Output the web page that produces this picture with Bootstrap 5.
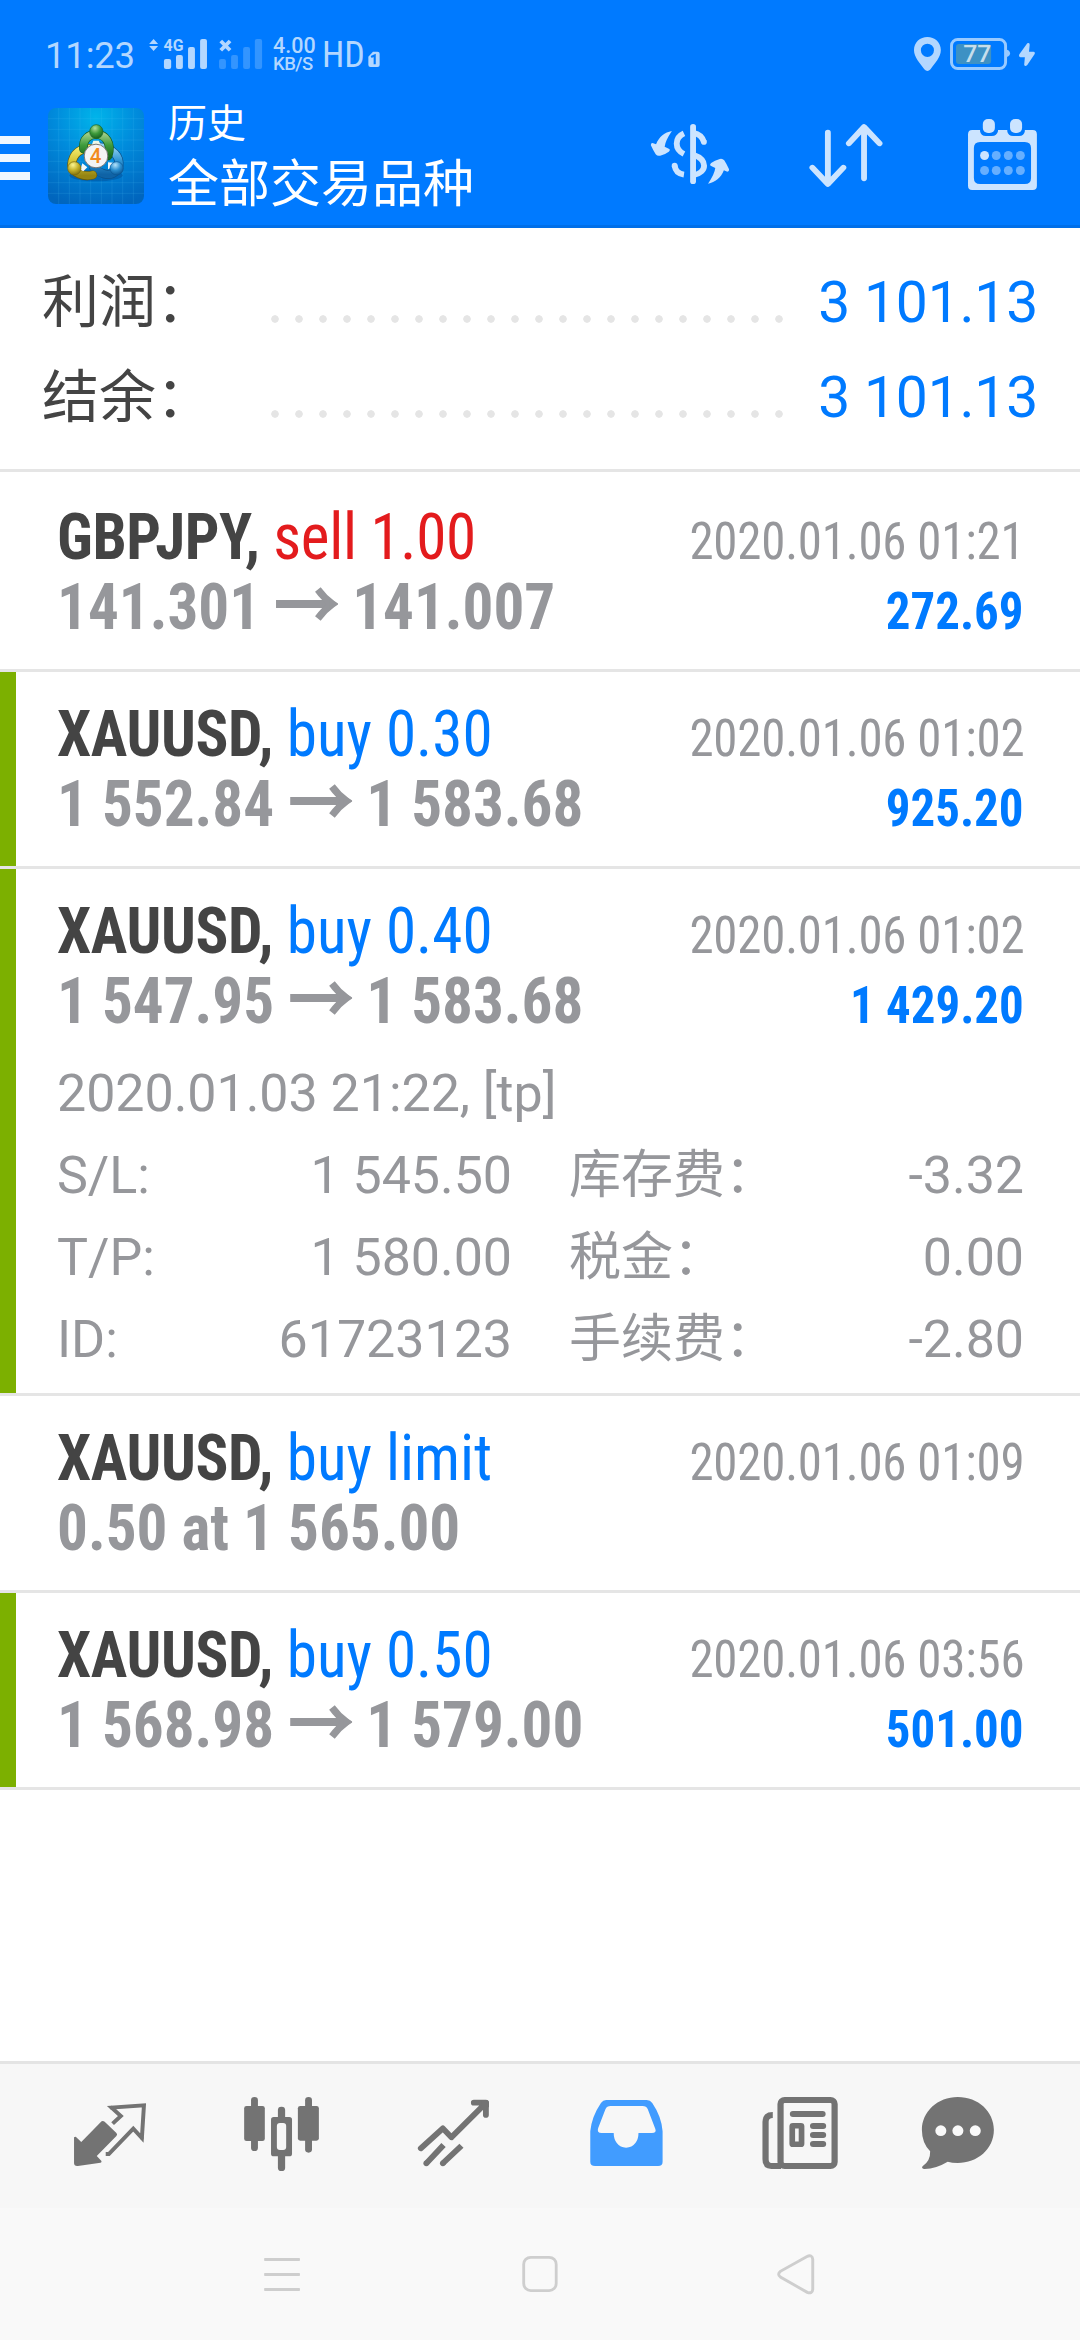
<!DOCTYPE html>
<html lang="zh-CN">
<head>
<meta charset="utf-8">
<meta name="viewport" content="width=device-width, initial-scale=1">
<title>历史</title>
<link href="https://cdn.jsdelivr.net/npm/bootstrap@5.3.0/dist/css/bootstrap.min.css" rel="stylesheet">
<style>
body{width:1080px;height:2340px;overflow:hidden;font-family:Roboto,"Noto Sans CJK SC",sans-serif;color:#444;background:#fff}
svg{display:block;flex:none}
.app-head{background:#007aff;height:228px;border-bottom:3px solid #006fe8}
.status{height:100px;color:#b3d7ff;padding-left:45px}
.clock{font-size:36.5px;width:100px;line-height:44px;margin-top:34px;letter-spacing:-.2px}
.speed{width:48px;margin-top:35px;margin-left:3px;font-weight:500}
.speed div{font-size:21.5px;line-height:21px}
.speed div+div{font-size:18.5px;line-height:19px;margin-top:-1px;letter-spacing:-.5px}
.hd{font-size:36px;font-stretch:75%;line-height:44px;margin-top:33px;margin-left:1px;width:46px}
.toolbar{height:125px}
.menu-bars{gap:10px;width:48px;padding-top:36px}
.menu-bars i{display:block;height:8px;width:30px;background:#f0f7ff}
.heads{color:#fff;margin-left:24px;width:447px}
.heads .t1{font-size:39px;line-height:46px;height:46px;margin-top:1px}
.heads .t2{font-size:51px;line-height:60px;height:60px;margin-top:8px}
.summary{height:244px;padding:27px 42px 0 43px;border-bottom:3px solid #e5e5e5;font-size:57px}
.sum-line{height:95px;line-height:95px}
.sum-line .lbl{width:220px;margin-left:-1px;white-space:nowrap}
.dots{width:528px;height:8px;background:radial-gradient(circle at 12px 4px,#e5e5e5 3.4px,transparent 4.1px) 0 0/24px 8px repeat-x;margin-top:60px;margin-left:1px}
.val{color:#007aff;letter-spacing:-.2px}
.deals>.deal{border:0;border-bottom:3px solid #e5e5e5!important;padding:27px 56px 27px 57px;border-radius:0;color:#96979b;background:#fff}
.deals>.deal:first-child{padding-top:30px}
.won{box-shadow:inset 16px 0 0 #7cb000}
.line{height:70px;line-height:70px;white-space:pre}
.lt,.rt{display:flex;align-items:baseline;transform:scaleX(.94);font-stretch:75%}
.lt{transform-origin:left;font-size:65px}
.rt{transform-origin:right;font-size:52px;letter-spacing:-.2px}
.rt b{letter-spacing:0}
.lt b,.rt b{font-weight:700}
.sym{color:#444;letter-spacing:-.4px}
.blue{color:#007aff}.red{color:#e31b1d;letter-spacing:-.3px}
.arr{margin:0 15px 0 17px}
.more{margin-top:17px;margin-bottom:-15px;font-size:52px;line-height:82px}
.more>div{height:82px;white-space:pre;letter-spacing:-.05px}
.c1{width:455px}.c2{width:455px}
.tabs{height:147px;background:#f7f7f7;border-top:3px solid #e4e4e4}
.sysnav{height:132px;background:#f9f9f9}
</style>
</head>
<body class="d-flex flex-column">
<svg width="0" height="0" style="display:none"><defs>
<symbol id="arrow" viewBox="0 0 66 42"><path d="M0 17H60" stroke="#96979b" stroke-width="8"/><path d="M44.500 2.500Q51 11 60 17Q51 23 44.500 31.500" fill="none" stroke="#96979b" stroke-width="7.500"/><path d="M57 11.500L66 17L57 22.500Z" fill="#96979b"/></symbol>
</defs></svg>
<header class="app-head flex-shrink-0">
 <div class="status d-flex">
  <div class="clock">11:23</div>
  <svg width="125" height="100" viewBox="421 0 363 300" preserveAspectRatio="none" fill="#b3d7ff">
   <path d="M446 117L459 132H433ZM446 153L459 138H433Z"/>
   <text x="475" y="153" font-size="49" font-weight="700" textLength="58" lengthAdjust="spacingAndGlyphs">4G</text>
   <rect x="476" y="177" width="21" height="30" rx="6"/><rect x="511" y="165" width="20" height="42" rx="6"/><rect x="546" y="141" width="20" height="66" rx="6"/><rect x="581" y="117" width="20" height="90" rx="6"/>
   <path d="M641 123L668 151M668 123L641 151" stroke="#b3d7ff" stroke-width="11"/>
   <g fill="#3395ff"><rect x="636" y="177" width="20" height="30" rx="6"/><rect x="671" y="165" width="20" height="42" rx="6"/><rect x="706" y="141" width="20" height="66" rx="6"/><rect x="740" y="117" width="21" height="90" rx="6"/></g>
  </svg>
  <div class="speed"><div>4.00</div><div>KB/S</div></div>
  <div class="hd">HD</div>
  <svg width="12" height="100" viewBox="1068 0 34 300" preserveAspectRatio="none"><path d="M1082 155H1095Q1101 155 1101 161V195Q1101 201 1095 201H1075Q1069 201 1069 195V170Z" fill="#b3d7ff"/><path d="M1077 171L1087 166V193" fill="none" stroke="#007aff" stroke-width="6"/></svg>
  <svg class="ms-auto" width="180" height="100" viewBox="1045.4 0 522.7 300" preserveAspectRatio="none">
   <path fill="#b3d7ff" fill-rule="evenodd" d="M1125 111C1146 111 1164 127 1164 150C1164 172 1146 190 1134 208Q1125 218 1116 208C1104 190 1086 172 1086 150C1086 127 1104 111 1125 111ZM1125 131A19 20 0 1 0 1125 171A19 20 0 1 0 1125 131Z"/>
   <rect x="1195" y="118.500" width="157" height="87" rx="18" fill="none" stroke="#99caff" stroke-width="8.500"/>
   <path d="M1356 149Q1365 152 1365 160Q1365 168 1356 171Z" fill="#99caff"/>
   <rect x="1208" y="132" width="102" height="60" rx="9" fill="#3d91c4"/>
   <text x="1229" y="186" font-size="70" font-weight="500" textLength="82" lengthAdjust="spacingAndGlyphs" fill="#c6deec">77</text>
   <path d="M1415 130Q1422 126 1422 134L1420 155H1433Q1439 156 1436 163L1415 195Q1408 201 1406 194L1408 172H1395Q1389 170 1392 163Z" fill="#b3d7ff"/>
  </svg>
 </div>
 <div class="toolbar d-flex">
  <div class="menu-bars d-flex flex-column"><i></i><i></i><i></i></div>
  <svg class="mt-2" width="96" height="96" viewBox="24 24 288 288">
   <defs>
    <radialGradient id="bg" cx=".5" cy=".1" r=".95"><stop offset="0" stop-color="#00b4ea"/><stop offset=".45" stop-color="#008bdc"/><stop offset="1" stop-color="#0065bd"/></radialGradient>
    <linearGradient id="gg" x2="0" y2="1"><stop stop-color="#9ccb84"/><stop offset=".5" stop-color="#3f9c3c"/><stop offset="1" stop-color="#1d6d20"/></linearGradient>
    <linearGradient id="gy" x2="0" y2="1"><stop stop-color="#f2ea6a"/><stop offset=".5" stop-color="#d3c231"/><stop offset="1" stop-color="#958412"/></linearGradient>
    <linearGradient id="gb" x2="0" y2="1"><stop stop-color="#8fd0f2"/><stop offset=".5" stop-color="#2e94d3"/><stop offset="1" stop-color="#0f63a6"/></linearGradient>
    <radialGradient id="bgn" cx=".4" cy=".25" r=".8"><stop stop-color="#b4e09b"/><stop offset=".5" stop-color="#3d9a3b"/><stop offset="1" stop-color="#125a1b"/></radialGradient>
    <radialGradient id="byl" cx=".4" cy=".25" r=".8"><stop stop-color="#fbf591"/><stop offset=".5" stop-color="#c5b32c"/><stop offset="1" stop-color="#7b6b08"/></radialGradient>
    <radialGradient id="bbl" cx=".4" cy=".25" r=".8"><stop stop-color="#b5e3fb"/><stop offset=".5" stop-color="#2b8fd0"/><stop offset="1" stop-color="#07508f"/></radialGradient>
   </defs>
   <rect x="24" y="24" width="288" height="288" rx="24" fill="url(#bg)"/>
   <path d="M56 24V312M88 24V312M120 24V312M152 24V312M184 24V312M216 24V312M248 24V312M280 24V312M24 56H312M24 88H312M24 120H312M24 152H312M24 184H312M24 216H312M24 248H312M24 280H312" stroke="#5ccbf5" stroke-opacity=".22" stroke-width="2"/>
   <ellipse cx="168" cy="226" rx="80" ry="18" fill="#003d80" opacity=".35"/>
   <g fill="none" stroke-linecap="round">
    <path d="M160 146C180 136 204 144 217 154C243 172 242 204 225 216C205 232 178 220 160 201" stroke="#0c4f88" stroke-width="27"/>
    <path d="M160 146C180 136 204 144 217 154C243 172 242 204 225 216C205 232 178 220 160 201" stroke="url(#gb)" stroke-width="23"/>
    <path d="M152 146C124 143 98 158 95 195C98 219 130 232 158 225" stroke="#65590c" stroke-width="27"/>
    <path d="M152 146C124 143 98 158 95 195C98 219 130 232 158 225" stroke="url(#gy)" stroke-width="23"/>
    <path d="M131 147C127 115 149 103 169 103C197 104 216 129 204 167" stroke="#165c1b" stroke-width="27"/>
    <path d="M131 147C127 115 149 103 169 103C197 104 216 129 204 167" stroke="url(#gg)" stroke-width="23"/>
   </g>
   <path d="M154 138L160 122H176L184 138Z" fill="#edf7e8"/><path d="M121 209L127 190L142 202L130 214ZM204 187L222 188L218 201L204 208Z" fill="#f3f8fb"/>
   <ellipse cx="169" cy="95" rx="20" ry="21" fill="url(#bgn)" stroke="#1a6423" stroke-width="2"/>
   <circle cx="103" cy="205" r="20" fill="url(#byl)" stroke="#766714" stroke-width="2"/>
   <circle cx="230" cy="205" r="20" fill="url(#bbl)" stroke="#0b5795" stroke-width="2"/>
   <circle cx="168" cy="168" r="35.500" fill="#f4f4f5" stroke="#777" stroke-width="3"/>
   <text x="167" y="189" font-size="62" font-weight="500" text-anchor="middle" textLength="35" lengthAdjust="spacingAndGlyphs" fill="#f28a1e">4</text>
  </svg>
  <div class="heads"><div class="t1">历史</div><div class="t2">全部交易品种</div></div>
  <svg width="150" height="125" viewBox="217.8 300 435.6 375" preserveAspectRatio="none" fill="#cce4ff">
   <path d="M383 393C362 397 346 410 337 433L327 429Q321 429 322 436Q329 452 336 463Q341 469 349 467Q364 463 374 455Q380 449 374 446L362 440Q364 422 383 393Z"/>
   <path d="M383 393C362 397 346 410 337 433L327 429Q321 429 322 436Q329 452 336 463Q341 469 349 467Q364 463 374 455Q380 449 374 446L362 440Q364 422 383 393Z" transform="rotate(180 435.500 472)"/>
   <rect x="436" y="372" width="17" height="180" rx="8.500"/>
   <g fill="none" stroke="#cce4ff" stroke-width="17"><path d="M418 400C390 413 390 448 418 462"/><path d="M445 398Q470 403 476 426M445 464C487 479 487 517 445 526" /><path d="M391 497C393 513 404 522 418 524"/></g>
   <circle cx="476" cy="426" r="8.500"/><circle cx="391" cy="497" r="8.500"/>
  </svg>
  <svg width="150" height="125" viewBox="653.4 300 435.6 375" preserveAspectRatio="none"><path d="M836 398V548M791 503L836 552L881 503M941 535V385M897 430L941 381L986 430" fill="none" stroke="#cce4ff" stroke-width="17" stroke-linecap="round" stroke-linejoin="round"/></svg>
  <svg width="165" height="125" viewBox="1089 300 479.2 375" preserveAspectRatio="none" fill="#cce4ff">
   <path fill-rule="evenodd" d="M1255 390H1278V394Q1280 408 1295 408H1312Q1327 408 1330 394V390H1357V394Q1359 408 1374 408H1391Q1406 408 1408 394V390H1431Q1443 390 1443 403V557Q1443 570 1431 570H1255Q1243 570 1243 557V403Q1243 390 1255 390ZM1278 426Q1260 426 1260 444V534Q1260 552 1278 552H1408Q1426 552 1426 534V444Q1426 426 1408 426Z"/>
   <rect x="1286" y="357" width="35" height="42" rx="15"/><rect x="1365" y="357" width="35" height="42" rx="15"/>
   <ellipse cx="1291" cy="466.500" rx="13" ry="13.500"/>
   <g fill="#66afff"><ellipse cx="1325" cy="466.500" rx="13" ry="13.500"/><ellipse cx="1360" cy="466.500" rx="13" ry="13.500"/><ellipse cx="1395" cy="466.500" rx="13" ry="13.500"/><ellipse cx="1291" cy="511.500" rx="13" ry="13.500"/><ellipse cx="1325" cy="511.500" rx="13" ry="13.500"/><ellipse cx="1360" cy="511.500" rx="13" ry="13.500"/><ellipse cx="1395" cy="511.500" rx="13" ry="13.500"/></g>
  </svg>
 </div>
</header>
<section class="summary flex-shrink-0">
 <div class="sum-line d-flex"><span class="lbl">利润：</span><span class="dots"></span><span class="val ms-auto">3 101.13</span></div>
 <div class="sum-line d-flex"><span class="lbl">结余：</span><span class="dots"></span><span class="val ms-auto">3 101.13</span></div>
</section>
<main class="list-group list-group-flush deals flex-grow-1">
 <article class="list-group-item deal">
  <div class="line d-flex justify-content-between align-items-baseline"><div class="lt"><b class="sym">GBPJPY, </b><span class="red">sell 1.00</span></div><div class="rt">2020.01.06 01:21</div></div>
  <div class="line d-flex justify-content-between align-items-baseline"><div class="lt"><b>141.301</b><svg class="arr" width="66" height="42"><use href="#arrow"/></svg><b>141.007</b></div><div class="rt blue"><b>272.69</b></div></div>
 </article>
 <article class="list-group-item deal won">
  <div class="line d-flex justify-content-between align-items-baseline"><div class="lt"><b class="sym">XAUUSD, </b><span class="blue">buy 0.30</span></div><div class="rt">2020.01.06 01:02</div></div>
  <div class="line d-flex justify-content-between align-items-baseline"><div class="lt"><b>1 552.84</b><svg class="arr" width="66" height="42"><use href="#arrow"/></svg><b>1 583.68</b></div><div class="rt blue"><b>925.20</b></div></div>
 </article>
 <article class="list-group-item deal won">
  <div class="line d-flex justify-content-between align-items-baseline"><div class="lt"><b class="sym">XAUUSD, </b><span class="blue">buy 0.40</span></div><div class="rt">2020.01.06 01:02</div></div>
  <div class="line d-flex justify-content-between align-items-baseline"><div class="lt"><b>1 547.95</b><svg class="arr" width="66" height="42"><use href="#arrow"/></svg><b>1 583.68</b></div><div class="rt blue"><b>1 429.20</b></div></div>
  <div class="more">
   <div>2020.01.03 21:22, [tp]</div>
   <div class="d-flex justify-content-between"><div class="c1 d-flex justify-content-between"><span>S/L:</span><span>1 545.50</span></div><div class="c2 d-flex justify-content-between"><span>库存费：</span><span>-3.32</span></div></div>
   <div class="d-flex justify-content-between"><div class="c1 d-flex justify-content-between"><span>T/P:</span><span>1 580.00</span></div><div class="c2 d-flex justify-content-between"><span>税金：</span><span>0.00</span></div></div>
   <div class="d-flex justify-content-between"><div class="c1 d-flex justify-content-between"><span>ID:</span><span>61723123</span></div><div class="c2 d-flex justify-content-between"><span>手续费：</span><span>-2.80</span></div></div>
  </div>
 </article>
 <article class="list-group-item deal">
  <div class="line d-flex justify-content-between align-items-baseline"><div class="lt"><b class="sym">XAUUSD, </b><span class="blue">buy limit</span></div><div class="rt">2020.01.06 01:09</div></div>
  <div class="line d-flex"><div class="lt"><b>0.50 at 1 565.00</b></div></div>
 </article>
 <article class="list-group-item deal won">
  <div class="line d-flex justify-content-between align-items-baseline"><div class="lt"><b class="sym">XAUUSD, </b><span class="blue">buy 0.50</span></div><div class="rt">2020.01.06 03:56</div></div>
  <div class="line d-flex justify-content-between align-items-baseline"><div class="lt"><b>1 568.98</b><svg class="arr" width="66" height="42"><use href="#arrow"/></svg><b>1 579.00</b></div><div class="rt blue"><b>501.00</b></div></div>
 </article>
</main>
<nav class="tabs d-flex flex-shrink-0">
 <svg width="180" height="144" viewBox="0 42 522.7 432" preserveAspectRatio="none" fill="#737373">
  <path d="M295 214Q299 211 304 215L338 249Q342 253 338 258L281 318L294 332Q297 336 292 338L226 348Q215 349 215 339V262Q219 258 223 263L236 276Z"/>
  <path d="M327 221L351 198L324 173L418 166L412 264L387 236L316 312H307" fill="none" stroke="#737373" stroke-width="11.500"/><circle cx="324" cy="173" r="5.500"/><circle cx="412" cy="264" r="5.500"/>
 </svg>
 <svg width="180" height="144" viewBox="522.7 42 522.7 432" preserveAspectRatio="none" fill="#737373">
  <rect x="729" y="141" width="20" height="162" rx="10"/><rect x="709" y="168" width="60" height="105" rx="7"/>
  <rect x="886" y="141" width="20" height="167" rx="10"/><rect x="865" y="168" width="61" height="104" rx="7"/>
  <rect x="807" y="170" width="21" height="193" rx="10"/><rect x="787" y="201" width="61" height="118" rx="8"/><rect x="804" y="219" width="27" height="81" rx="9" fill="#f7f7f7"/>
 </svg>
 <svg width="180" height="144" viewBox="1045.4 42 522.7 432" preserveAspectRatio="none">
  <path d="M1222 295L1286 235L1311 262L1408 162M1376 158H1411V195" fill="none" stroke="#737373" stroke-width="17" stroke-linecap="round" stroke-linejoin="round"/><path d="M1238 340L1288 285M1286 340L1340 287" fill="none" stroke="#737373" stroke-width="17"/><g fill="#737373"><path d="M1400 150H1412Q1420 151 1420 159V172H1396Z"/><circle cx="1238" cy="340" r="8.500"/><circle cx="1286" cy="340" r="8.500"/></g>
 </svg>
 <svg width="180" height="144" viewBox="0 42 522.7 432" preserveAspectRatio="none"><path fill="#419cff" fill-rule="evenodd" d="M192 150H310Q320 150 326 159Q353 200 356 244V335Q356 348 343 348H160Q146 348 146 335V244Q150 200 177 159Q183 150 192 150ZM205 168Q194 168 190 178L169 234Q164 249 179 249H214Q214 267 223 279Q233 293 250 293Q267 293 277 279Q286 267 286 249H325Q339 249 335 237L313 178Q309 168 298 168Z"/></svg>
 <svg width="180" height="144" viewBox="522.7 42 522.7 432" preserveAspectRatio="none">
  <g fill="none" stroke="#737373" stroke-width="18"><rect x="698.500" y="150" width="157" height="198" rx="12"/><path d="M676 195Q655 195 655 215V328Q655 348 672 348H700"/><path d="M734.500 192H820.500M793 228H822M793 255H822M793 282H822" stroke-linecap="round"/><rect x="732.500" y="227" width="27" height="56" rx="2" stroke-width="16.500"/></g>
 </svg>
 <svg width="180" height="144" viewBox="1045.4 42 522.7 432" preserveAspectRatio="none"><path fill="#737373" d="M1213 141C1273 141 1318 185 1318 240C1318 297 1270 339 1213 339Q1196 339 1184 335Q1150 356 1117 357Q1106 356 1111 349Q1134 333 1133 304Q1109 279 1109 240C1109 185 1155 141 1213 141Z"/><g fill="#f9f9f9"><circle cx="1164" cy="242" r="16"/><circle cx="1213.500" cy="242" r="16"/><circle cx="1264" cy="242" r="16"/></g></svg>
</nav>
<footer class="sysnav d-flex flex-shrink-0">
 <svg width="360" height="132" viewBox="0 474 1045.4 396" preserveAspectRatio="none" fill="#cecece"><rect x="767" y="624" width="104" height="9" rx="2"/><rect x="767" y="669" width="104" height="9" rx="2"/><rect x="767" y="714" width="104" height="9" rx="2"/></svg>
 <svg width="360" height="132" viewBox="360 2208 360 132"><rect x="523.700" y="2257.300" width="32.500" height="33.300" rx="7" fill="none" stroke="#cecece" stroke-width="2.800"/></svg>
 <svg width="360" height="132" viewBox="522.7 474 1045.4 396" preserveAspectRatio="none"><path d="M774 620Q791 612 792 628V718Q791 732 776 727L698 681Q688 673 698 664Z" fill="none" stroke="#cecece" stroke-width="8.500"/></svg>
</footer>
<script src="https://cdn.jsdelivr.net/npm/bootstrap@5.3.0/dist/js/bootstrap.bundle.min.js"></script>
</body>
</html>
